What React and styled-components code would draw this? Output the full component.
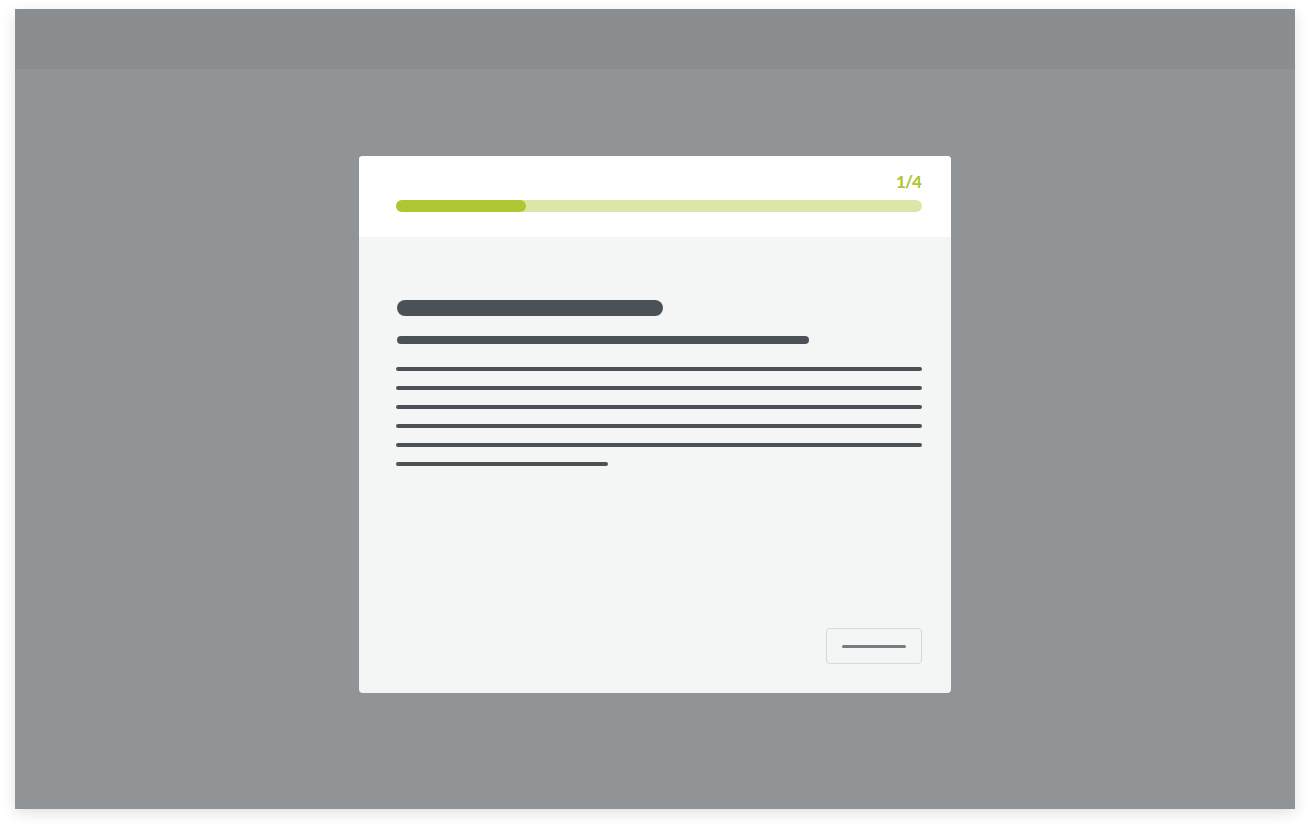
import React from "react";
import styled, { createGlobalStyle } from "styled-components";

const Global = createGlobalStyle`
  html, body { margin: 0; padding: 0; background: #ffffff; }
  body { font-family: "Lato", "Open Sans", sans-serif; }
`;

const Page = styled.div`
  padding: 9px 15px 21px 15px;
`;

const Frame = styled.div`
  width: 1280px;
  height: 800px;
  background: #919497;
  box-shadow: 0 4px 14px rgba(0, 0, 0, 0.12);
  display: flex;
  flex-direction: column;
`;

const TopBar = styled.div`
  height: 60px;
  flex: none;
  background: #8a8e91;
`;

const Stage = styled.div`
  flex: 1;
  display: flex;
  justify-content: center;
  align-items: flex-start;
  padding-top: 87px;
`;

const Modal = styled.div`
  width: 592px;
  height: 537px;
  border-radius: 4px;
  overflow: hidden;
  background: #f4f5f5;
  display: flex;
  flex-direction: column;
`;

const Header = styled.div`
  height: 81px;
  flex: none;
  background: #ffffff;
  padding: 0 29px 0 37px;
  display: flex;
  flex-direction: column;
`;

const Counter = styled.div`
  align-self: flex-end;
  margin-top: 15px;
  margin-right: 1px;
  font-size: 17px;
  font-weight: 900;
  line-height: 22px;
  color: #afc736;
  letter-spacing: -0.9px;
`;

const Track = styled.div`
  margin-top: 7px;
  height: 12px;
  border-radius: 6px;
  background: #dde6a6;
  display: flex;
`;

const Fill = styled.div`
  height: 100%;
  border-radius: 6px;
  background: #afc733;
`;

const Body = styled.div`
  flex: 1;
  padding: 63px 29px 29px 37px;
  display: flex;
  flex-direction: column;
`;

const Bar = styled.div`
  height: ${(p) => p.$h}px;
  width: ${(p) => p.$w}px;
  border-radius: ${(p) => p.$h / 2}px;
  background: #4a5157;
  margin-top: ${(p) => p.$mt}px;
  margin-left: ${(p) => p.$ml || 0}px;
  flex: none;
`;

const Lines = styled.div`
  display: flex;
  flex-direction: column;
  gap: 15px;
  margin-top: 23px;
`;

const Footer = styled.div`
  margin-top: auto;
  display: flex;
  justify-content: flex-end;
`;

const Button = styled.div`
  width: 96px;
  height: 36px;
  box-sizing: border-box;
  border: 1px solid #d6d8d9;
  border-radius: 4px;
  display: flex;
  align-items: center;
  justify-content: center;
`;

const ButtonLabel = styled.div`
  width: 64px;
  height: 3px;
  border-radius: 2px;
  background: #747c82;
`;

export default function App() {
  const progress = 130 / 526;
  return (
    <>
      <Global />
      <Page>
        <Frame>
          <TopBar />
          <Stage>
            <Modal>
              <Header>
                <Counter>1/4</Counter>
                <Track>
                  <Fill style={{ width: `${progress * 100}%` }} />
                </Track>
              </Header>
              <Body>
                <Bar $h={16} $w={266} $mt={0} $ml={1} />
                <Bar $h={8} $w={412} $mt={20} $ml={1} />
                <Lines>
                  <Bar $h={4} $w={526} $mt={0} />
                  <Bar $h={4} $w={526} $mt={0} />
                  <Bar $h={4} $w={526} $mt={0} />
                  <Bar $h={4} $w={526} $mt={0} />
                  <Bar $h={4} $w={526} $mt={0} />
                  <Bar $h={4} $w={212} $mt={0} />
                </Lines>
                <Footer>
                  <Button>
                    <ButtonLabel />
                  </Button>
                </Footer>
              </Body>
            </Modal>
          </Stage>
        </Frame>
      </Page>
    </>
  );
}
